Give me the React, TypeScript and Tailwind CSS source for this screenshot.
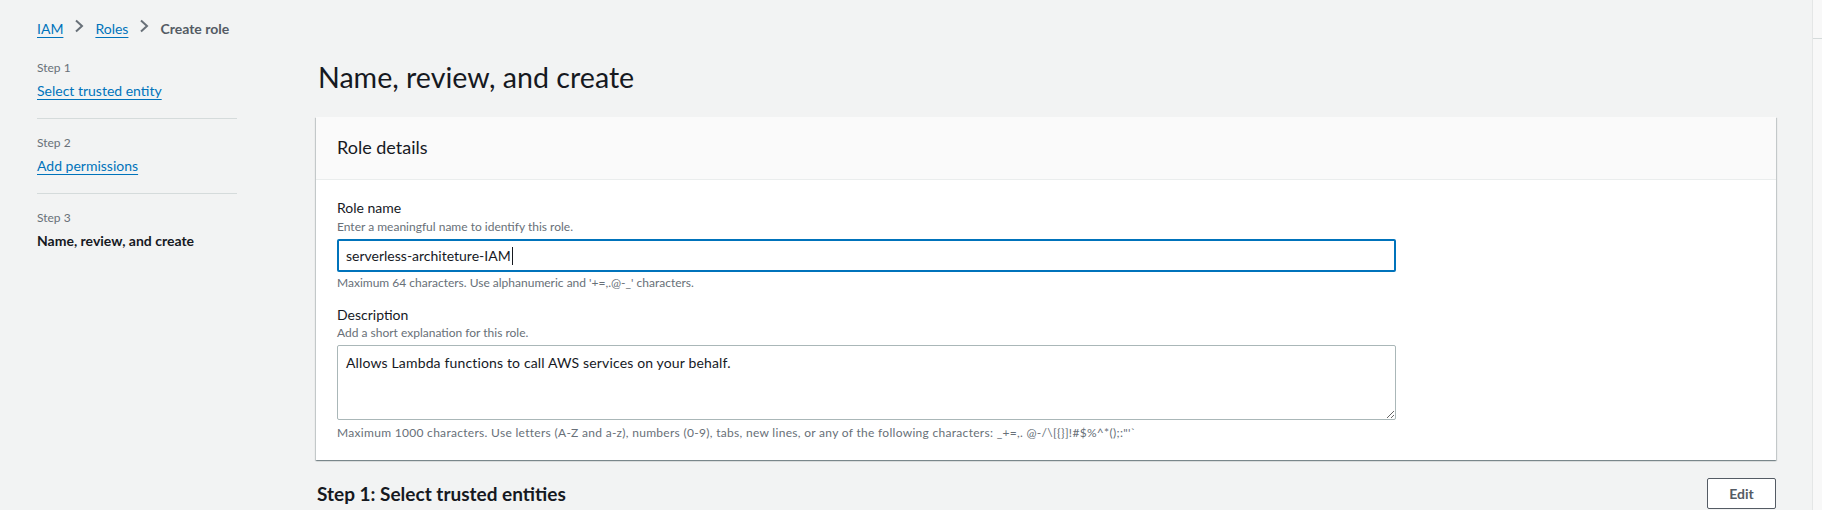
import React from "react"

const font = { fontFamily: "Lato, 'Liberation Sans', Arial, sans-serif" }

function Chevron() {
  return (
    <svg width="10" height="14" viewBox="0 0 10 14" className="mx-[11px]">
      <polyline points="2,1.5 8,7 2,12.5" fill="none" stroke="#687078" strokeWidth="2" />
    </svg>
  )
}

function NavStep({ step, label, active, first }: { step: string; label: string; active?: boolean; first?: boolean }) {
  return (
    <div className={`${first ? "pt-[12px]" : "pt-[16px]"} pb-[17px] ${active ? "" : "border-b border-[#d5dbdb]"}`}>
      <div className="text-[12px] leading-[16px] text-[#687078]">{step}</div>
      <div className="mt-[5px] text-[14px] leading-[20px]">
        {active ? (
          <span className="font-bold text-[#16191f]">{label}</span>
        ) : (
          <a className="text-[#0073bb] underline underline-offset-[3px] decoration-1">{label}</a>
        )}
      </div>
    </div>
  )
}

export default function App() {
  return (
    <div className="min-h-[510px] bg-[#f2f3f3] text-[#16191f] flex" style={font}>
      <div className="flex-1">
        <div className="pl-[37px] pt-[19px] h-[48px] flex items-start text-[14px] leading-[20px]">
          <a className="text-[#0073bb] underline underline-offset-[3px] decoration-1">IAM</a>
          <Chevron />
          <a className="text-[#0073bb] underline underline-offset-[3px] decoration-1">Roles</a>
          <Chevron />
          <span className="font-bold text-[#545b64]">Create role</span>
        </div>

        <div className="flex">
          <nav className="ml-[37px] w-[200px]">
            <NavStep step="Step 1" label="Select trusted entity" first />
            <NavStep step="Step 2" label="Add permissions" />
            <NavStep step="Step 3" label="Name, review, and create" active />
          </nav>

          <main className="ml-[79px] w-[1460px]">
            <h1 className="pt-[11px] ml-[2px] text-[28.6px] leading-[36px] font-normal text-[#16191f]">
              Name, review, and create
            </h1>

            <section className="mt-[22px] bg-white shadow-[0_1px_1px_0_rgba(0,28,36,0.3),1px_1px_1px_0_rgba(0,28,36,0.15),-1px_1px_1px_0_rgba(0,28,36,0.15)]">
              <div className="bg-[#fafafa] border-b border-[#eaeded] px-[21px] pt-[18px] pb-[20px]">
                <h2 className="text-[18px] leading-[24px]">Role details</h2>
              </div>

              <div className="pl-[21px] pt-[18px] pb-[19px]">
                <div className="w-[1059px]">
                  <div className="text-[14px] leading-[20px]">Role name</div>
                  <div className="mt-[1px] text-[12px] leading-[16px] text-[#687078]">
                    Enter a meaningful name to identify this role.
                  </div>
                  <div className="mt-[4px] h-[33px] border-2 border-[#0073bb] rounded-[2px] px-[7px] flex items-center text-[14px]">
                    <span>serverless-architeture-IAM</span>
                    <span className="ml-[1px] w-px h-[18px] bg-[#16191f]" />
                  </div>
                  <div className="mt-[3px] text-[12px] leading-[16px] text-[#687078]">
                    Maximum 64 characters. Use alphanumeric and '+=,.@-_' characters.
                  </div>

                  <div className="mt-[14px] text-[14px] leading-[20px]">Description</div>
                  <div className="text-[12px] leading-[16px] text-[#687078]">Add a short explanation for this role.</div>
                  <textarea
                    readOnly
                    defaultValue="Allows Lambda functions to call AWS services on your behalf."
                    className="mt-[4px] block w-full h-[75px] border border-[#aab7b8] rounded-[2px] px-[8px] pt-[7px] text-[14px] leading-[20px] tracking-[0.15px] text-[#16191f] outline-none"
                    style={font}
                  />
                  <div className="mt-[5px] text-[12px] leading-[16px] tracking-[0.3px] text-[#687078]">
                    Maximum 1000 characters. Use letters (A-Z and a-z), numbers (0-9), tabs, new lines, or any of the
                    following characters: _+=,. @-/\[{"{"}{"}"}]!#$%^*();:"'`
                  </div>
                </div>
              </div>
            </section>

            <div className="mt-[18px] flex items-center justify-between">
              <h2 className="ml-[1px] text-[19px] leading-[24px] font-bold">Step 1: Select trusted entities</h2>
              <button className="h-[31px] w-[69px] border border-[#545b64] rounded-[2px] bg-white text-[14px] font-bold text-[#545b64]">
                Edit
              </button>
            </div>
          </main>
        </div>
      </div>

      <aside className="w-[10px] bg-[#f8f8f8] border-l border-[#e4e6e6] pt-[38px]">
        <div className="h-px bg-[#d5dbdb]" />
      </aside>
    </div>
  )
}
